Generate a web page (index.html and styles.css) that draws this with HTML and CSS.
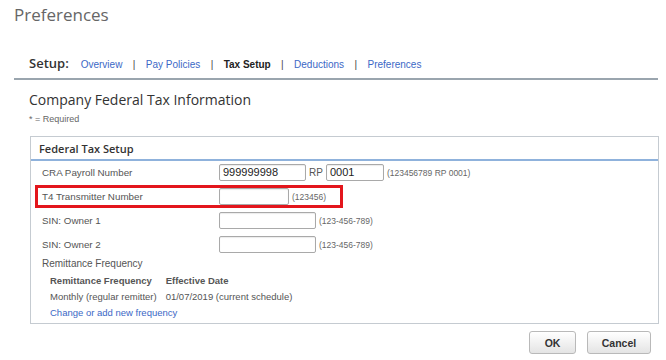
FILE: index.html
```html
<!DOCTYPE html>
<html>
<head>
<meta charset="utf-8">
<link rel="stylesheet" href="styles.css">
</head>
<body>
<div class="page">
  <h1 class="title">Preferences</h1>
  <nav class="tabs">
    <span class="tabs-label">Setup:</span>
    <a class="tab">Overview</a><span class="sep">|</span>
    <a class="tab">Pay Policies</a><span class="sep">|</span>
    <span class="tab current">Tax Setup</span><span class="sep">|</span>
    <a class="tab">Deductions</a><span class="sep">|</span>
    <a class="tab">Preferences</a>
  </nav>
  <h2 class="section-title">Company Federal Tax Information</h2>
  <p class="req">* = Required</p>
  <section class="panel">
    <div class="panel-head">Federal Tax Setup</div>
    <div class="panel-body">
      <div class="row">
        <span class="label">CRA Payroll Number</span>
        <span class="field w87">999999998</span>
        <span class="rp">RP</span>
        <span class="field w58">0001</span>
        <span class="hint">(123456789 RP 0001)</span>
      </div>
      <div class="row highlight">
        <span class="label">T4 Transmitter Number</span>
        <span class="field w70"></span>
        <span class="hint">(123456)</span>
      </div>
      <div class="row">
        <span class="label">SIN: Owner 1</span>
        <span class="field w97"></span>
        <span class="hint">(123-456-789)</span>
      </div>
      <div class="row">
        <span class="label">SIN: Owner 2</span>
        <span class="field w97"></span>
        <span class="hint">(123-456-789)</span>
      </div>
      <div class="remit">Remittance Frequency</div>
      <div class="remit-table">
        <span class="th">Remittance Frequency</span><span class="th">Effective Date</span>
        <span class="td">Monthly (regular remitter)</span><span class="td">01/07/2019 (current schedule)</span>
      </div>
      <a class="change">Change or add new frequency</a>
    </div>
  </section>
  <div class="actions">
    <button class="btn ok">OK</button>
    <button class="btn cancel">Cancel</button>
  </div>
</div>
</body>
</html>
```

FILE: styles.css
```css
html, body {
  margin: 0;
  padding: 0;
  background: #fff;
}
body {
  font-family: "Liberation Sans", Arial, sans-serif;
  color: #555;
}
.page {
  padding: 0 8px 0 14px;
}
.title {
  margin: 0;
  padding-top: 3px;
  font-family: "Open Sans", sans-serif;
  font-weight: 400;
  font-size: 17px;
  line-height: 24px;
  color: #666;
}
.tabs {
  margin-top: 27px;
  width: 644px;
  box-sizing: border-box;
  padding: 0 0 4px 15px;
  border-bottom: 2px solid #9aa5ae;
  display: flex;
  align-items: baseline;
  font-size: 10px;
  line-height: 18px;
}
.tabs-label {
  font-family: "Open Sans", sans-serif;
  font-weight: 600;
  font-size: 13px;
  color: #333;
  margin-right: 12px;
}
.tab {
  color: #3b68c6;
}
.tab.current {
  color: #222;
  font-weight: bold;
}
.sep {
  color: #444;
  margin: 0 10.4px;
}
.section-title {
  margin: 10px 0 0 15px;
  font-family: "Open Sans", sans-serif;
  font-weight: 400;
  font-size: 14px;
  line-height: 20px;
  color: #333;
}
.req {
  margin: 3px 0 0 15px;
  font-size: 9px;
  line-height: 12px;
  color: #666;
}
.panel {
  margin: 11px 0 0 16px;
  width: 629px;
  box-sizing: border-box;
  border: 1px solid #c5cbd1;
}
.panel-head {
  height: 22px;
  padding-left: 8px;
  font-family: "Open Sans", sans-serif;
  font-weight: 600;
  font-size: 11px;
  line-height: 23px;
  color: #333;
  border-bottom: 2px solid #8fb2dc;
}
.panel-body {
  padding: 3px 0 2px 11px;
  display: flex;
  flex-direction: column;
  align-items: flex-start;
}
.row {
  position: relative;
  display: flex;
  align-items: center;
  height: 17px;
  margin-bottom: 7px;
  font-size: 9.8px;
}
.row.highlight::after {
  content: "";
  position: absolute;
  left: -7px;
  top: -3px;
  width: 302px;
  height: 17px;
  border: 3px solid #e3161c;
}
.label {
  width: 177px;
  color: #555;
}
.field {
  box-sizing: border-box;
  height: 17px;
  border: 1px solid #a9a9a9;
  border-radius: 2px;
  padding-left: 3px;
  font-size: 11px;
  line-height: 15px;
  color: #222;
  box-shadow: inset 0 1px 1px rgba(0,0,0,0.08);
}
.w87 { width: 87px; }
.w58 { width: 58px; }
.w70 { width: 70px; }
.w97 { width: 97px; }
.rp {
  margin: 0 3px;
  color: #555;
  font-size: 10px;
}
.hint {
  margin-left: 3px;
  font-size: 8.5px;
  color: #666;
}
.remit {
  font-size: 10px;
  line-height: 16px;
  margin-top: -4px;
  color: #555;
}
.remit-table {
  display: grid;
  grid-template-columns: auto auto;
  column-gap: 9px;
  padding-left: 8px;
  font-size: 9.5px;
  line-height: 16px;
  margin-top: 1px;
}
.th {
  font-weight: bold;
  color: #555;
}
.td {
  color: #555;
}
.change {
  padding-left: 8px;
  font-size: 9.5px;
  line-height: 16px;
  color: #3b68c6;
}
.actions {
  width: 637px;
  display: flex;
  justify-content: flex-end;
  gap: 11px;
  margin-top: 7px;
}
.btn {
  height: 23px;
  border: 1px solid #b9b9b9;
  border-radius: 3px;
  background: linear-gradient(#ffffff, #e4e4e4);
  font-family: "Liberation Sans", Arial, sans-serif;
  font-weight: bold;
  font-size: 10.5px;
  color: #333;
  padding: 0;
}
.ok { width: 47px; }
.cancel { width: 64px; }
```
